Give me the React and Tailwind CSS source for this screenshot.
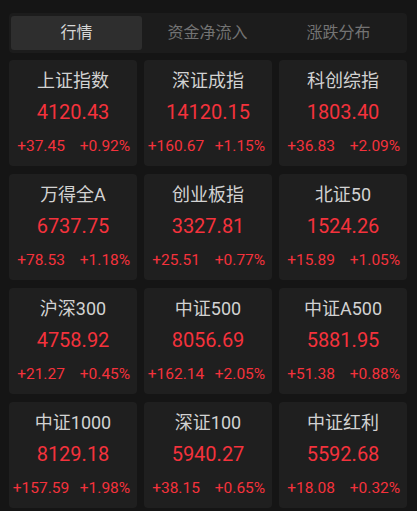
import React from "react";

const tabs = ["行情", "资金净流入", "涨跌分布"];

const data = [
  ["上证指数", "4120.43", "+37.45", "+0.92%"],
  ["深证成指", "14120.15", "+160.67", "+1.15%"],
  ["科创综指", "1803.40", "+36.83", "+2.09%"],
  ["万得全A", "6737.75", "+78.53", "+1.18%"],
  ["创业板指", "3327.81", "+25.51", "+0.77%"],
  ["北证50", "1524.26", "+15.89", "+1.05%"],
  ["沪深300", "4758.92", "+21.27", "+0.45%"],
  ["中证500", "8056.69", "+162.14", "+2.05%"],
  ["中证A500", "5881.95", "+51.38", "+0.88%"],
  ["中证1000", "8129.18", "+157.59", "+1.98%"],
  ["深证100", "5940.27", "+38.15", "+0.65%"],
  ["中证红利", "5592.68", "+18.08", "+0.32%"],
];

const font = { fontFamily: 'Roboto, "Noto Sans CJK SC", sans-serif' };

export default function App() {
  return (
    <div
      className="w-[417px] h-[511px] bg-[#151515] pt-[13px] pl-[9px] pr-[10px] overflow-hidden"
      style={font}
    >
      <div className="flex h-[40px] bg-[#1c1c1c] rounded-[4px] pl-[2px] pr-[3px] py-[3px]">
        {tabs.map((t, i) => (
          <div
            key={t}
            className={
              i === 0
                ? "flex-1 flex items-center justify-center rounded-[3px] bg-[#2e2e2e] text-[#d6d6d6] text-[16px] leading-[20px]"
                : "flex-1 flex items-center justify-center text-[#737373] text-[16px] leading-[20px]"
            }
          >
            {t}
          </div>
        ))}
      </div>
      <div className="grid grid-cols-3 gap-x-[7px] gap-y-[8px] mt-[7px]">
        {data.map(([name, val, chg, pct]) => (
          <div
            key={name}
            className="h-[106px] bg-[#1f1f1f] rounded-[4px] pt-[8px] flex flex-col items-stretch"
          >
            <div className="text-center text-[18px] leading-[26px] text-[#d2d2d2]">
              {name}
            </div>
            <div className="text-center text-[20px] leading-[28px] mt-[4px] text-[#f4323c]">
              {val}
            </div>
            <div className="flex mt-[10px] text-[15.5px] leading-[20px] text-[#f4323c]">
              <div className="flex-1 text-center whitespace-nowrap">{chg}</div>
              <div className="flex-1 text-center whitespace-nowrap">{pct}</div>
            </div>
          </div>
        ))}
      </div>
    </div>
  );
}
